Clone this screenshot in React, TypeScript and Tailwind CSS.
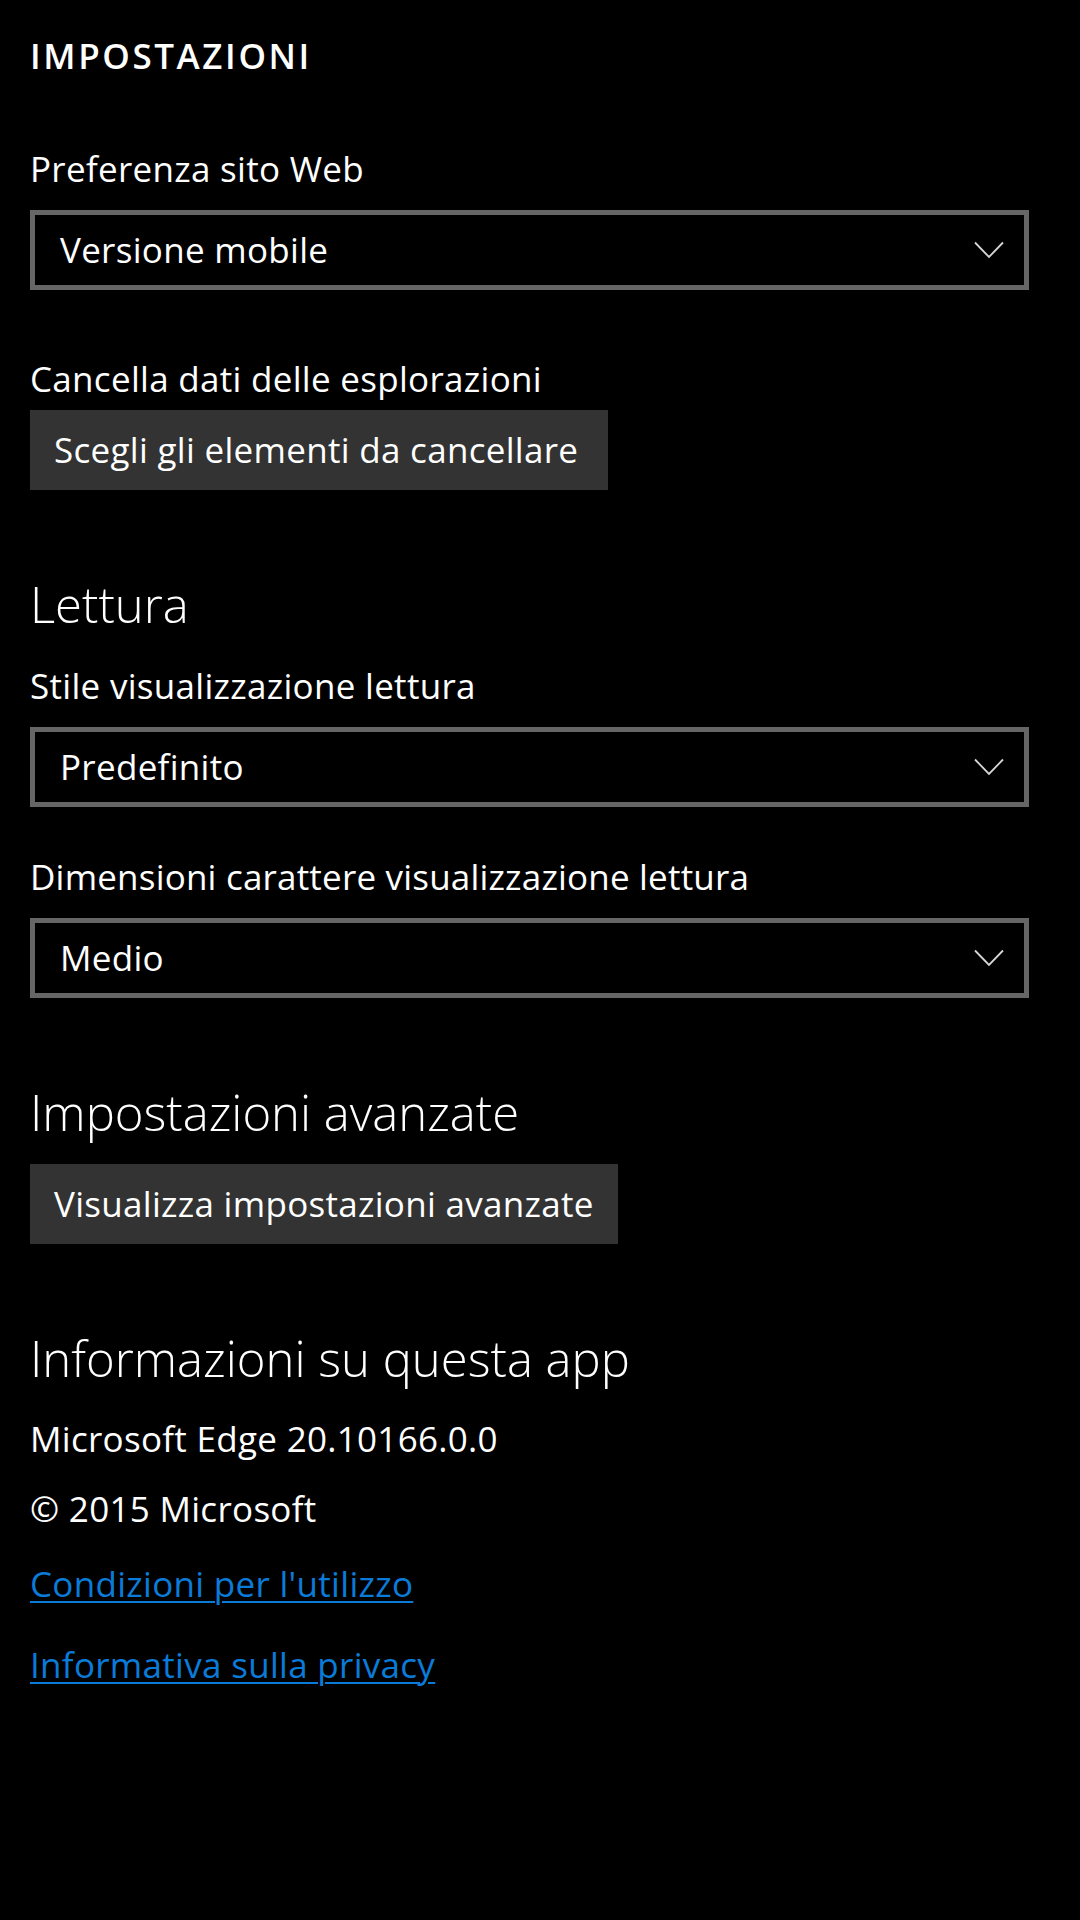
import type { ReactNode } from 'react';

function Chevron(): ReactNode {
  return (
    <svg width="30" height="18" viewBox="0 0 30 18" fill="none" aria-hidden="true">
      <path d="M1 1.5 L15 16 L29 1.5" stroke="#d6d6d6" strokeWidth="1.8" />
    </svg>
  );
}

function Dropdown({ value, className }: { value: string; className?: string }): ReactNode {
  return (
    <div className={`flex h-[80px] items-center justify-between border-[5px] border-[#666666] pl-[25px] pr-[20px] ${className ?? ''}`}>
      <span className="text-[35px] leading-[46px] tracking-[0.3px]">{value}</span>
      <Chevron />
    </div>
  );
}

export default function App(): ReactNode {
  return (
    <div className="min-h-[1920px] w-[1080px] bg-black pl-[30px] pr-[51px] font-['Open_Sans',sans-serif] text-white">
      <h1 className="pt-[33px] text-[35px] font-semibold leading-[46px] tracking-[2.6px]">IMPOSTAZIONI</h1>

      <div className="mt-[67px] text-[35px] leading-[46px] tracking-[0.3px]">Preferenza sito Web</div>
      <Dropdown value="Versione mobile" className="mt-[18px]" />

      <div className="mt-[66px] text-[35px] leading-[46px] tracking-[0.3px]">Cancella dati delle esplorazioni</div>
      <button className="mt-[8px] flex h-[80px] w-[578px] items-center bg-[#333333] pl-[24px] text-[35px] leading-[46px] tracking-[0.3px]">
        Scegli gli elementi da cancellare
      </button>

      <h2 className="mt-[81px] text-[49px] font-light leading-[66px]">Lettura</h2>
      <div className="mt-[26px] text-[35px] leading-[46px] tracking-[0.3px]">Stile visualizzazione lettura</div>
      <Dropdown value="Predefinito" className="mt-[18px]" />

      <div className="mt-[47px] text-[35px] leading-[46px] tracking-[0.2px]">Dimensioni carattere visualizzazione lettura</div>
      <Dropdown value="Medio" className="mt-[18px]" />

      <h2 className="mt-[81px] text-[49px] font-light leading-[66px]">Impostazioni avanzate</h2>
      <button className="mt-[19px] flex h-[80px] w-[588px] items-center bg-[#333333] pl-[24px] text-[35px] leading-[46px] tracking-[0.3px]">
        Visualizza impostazioni avanzate
      </button>

      <h2 className="mt-[81px] text-[49px] font-light leading-[66px]">Informazioni su questa app</h2>
      <div className="mt-[25px] text-[35px] leading-[46px] tracking-[0.3px]">Microsoft Edge 20.10166.0.0</div>
      <div className="mt-[24px] text-[35px] leading-[46px] tracking-[0.3px]">© 2015 Microsoft</div>
      <div className="mt-[29px]">
        <a href="#" className="text-[35px] leading-[46px] tracking-[0.3px] text-[#0a7bd8] underline decoration-[2px] underline-offset-[4px]">
          Condizioni per l'utilizzo
        </a>
      </div>
      <div className="mt-[35px]">
        <a href="#" className="text-[35px] leading-[46px] tracking-[0.3px] text-[#0a7bd8] underline decoration-[2px] underline-offset-[4px]">
          Informativa sulla privacy
        </a>
      </div>
    </div>
  );
}
